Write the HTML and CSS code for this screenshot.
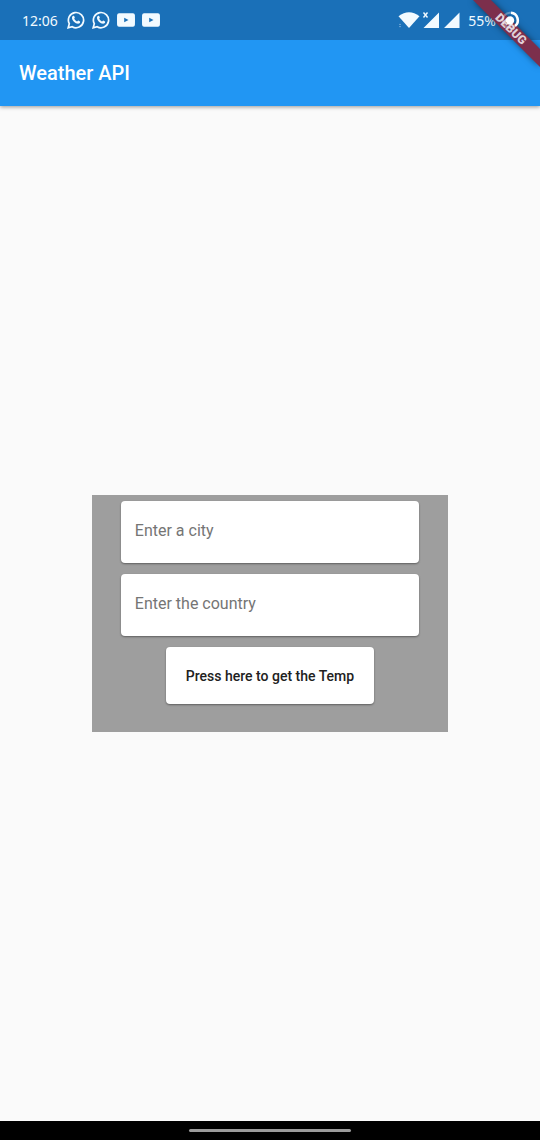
FILE: index.html
```html
<!DOCTYPE html>
<html lang="en">
<head>
<meta charset="utf-8">
<meta name="viewport" content="width=device-width, initial-scale=1">
<title>Weather API</title>
<link rel="stylesheet" href="styles.css">
</head>
<body>
<div class="status">
  <span class="time">12:06</span>
  <svg class="chat" viewBox="0 0 18 18" aria-hidden="true"><path d="M1.2 16.8l1.1-4.1A7.6 7.6 0 1 1 5.2 15.7z" fill="none" stroke="currentColor" stroke-width="1.7"/><path d="M6.2 4.8c.5-.2.9 0 1.1.5l.5 1.2c.1.4-.6 1-.6 1.3.6 1.2 1.6 2.1 2.8 2.6.4.1.9-1 1.3-.9l1.7.9c.3.2.1 1.4-.5 1.9-2.5 1.8-7.8-2.5-7.5-5.6.1-.8.6-1.6 1.2-1.9z" fill="currentColor"/></svg>
  <svg class="chat" viewBox="0 0 18 18" aria-hidden="true"><path d="M1.2 16.8l1.1-4.1A7.6 7.6 0 1 1 5.2 15.7z" fill="none" stroke="currentColor" stroke-width="1.7"/><path d="M6.2 4.8c.5-.2.9 0 1.1.5l.5 1.2c.1.4-.6 1-.6 1.3.6 1.2 1.6 2.1 2.8 2.6.4.1.9-1 1.3-.9l1.7.9c.3.2.1 1.4-.5 1.9-2.5 1.8-7.8-2.5-7.5-5.6.1-.8.6-1.6 1.2-1.9z" fill="currentColor"/></svg>
  <svg class="video" viewBox="0 0 18 14" aria-hidden="true"><path fill="currentColor" fill-rule="evenodd" d="M2 .3Q9 0 16 .3 17.7.5 17.9 2 18.1 7 17.9 12 17.7 13.5 16 13.7 9 14 2 13.7.3 13.5.1 12-.1 7 .1 2 .3.5 2 .3zM7.2 4.7v4.6L11.5 7z"/></svg>
  <svg class="video" viewBox="0 0 18 14" aria-hidden="true"><path fill="currentColor" fill-rule="evenodd" d="M2 .3Q9 0 16 .3 17.7.5 17.9 2 18.1 7 17.9 12 17.7 13.5 16 13.7 9 14 2 13.7.3 13.5.1 12-.1 7 .1 2 .3.5 2 .3zM7.2 4.7v4.6L11.5 7z"/></svg>
  <span class="system">
    <svg class="signals" viewBox="0 0 64 20" aria-hidden="true"><g fill="currentColor"><path d="M.5 6.2Q11 -1.5 21.5 6.2L11 18z"/><path d="M41 2.5V18H25.5zM61.5 2.5V18H46z"/><path d="M1 15l1-1.5 1 1.5zM1 16l1 1.5 1-1.5z" opacity=".5"/></g><path d="M25.5 2.5l4 5M29.5 2.5l-4 5" stroke="currentColor" stroke-width="1.4"/></svg>
    <span class="percent">55%</span>
  </span>
</div>
<header class="appbar"><h1>Weather API</h1></header>
<main class="content">
  <form class="panel">
    <input class="field" type="text" placeholder="Enter a city" aria-label="City">
    <input class="field" type="text" placeholder="Enter the country" aria-label="Country">
    <button class="submit" type="button">Press here to get the Temp</button>
  </form>
</main>
<footer class="navbar"><span class="handle"></span></footer>
<svg class="ribbon" viewBox="0 0 75 75" aria-hidden="true">
  <path class="band" d="M8 0H26L75 49V67z"/>
  <text class="debug" x="46" y="33" transform="rotate(45 46 29)" text-anchor="middle">DEBUG</text>
  <circle cx="45" cy="20.5" r="4.2" fill="#fff"/>
  <path d="M46 12.700a7.500 7.500 0 0 1 4 13.300" fill="none" stroke="#fff" stroke-width="2.600"/>
  <path d="M50 26A7.500 7.500 0 1 1 46 12.700" fill="none" stroke="#fff" stroke-width="2" opacity=".3"/>
</svg>
</body>
</html>
```
FILE: styles.css
```css
* {
  box-sizing: border-box;
}

body {
  margin: 0;
  min-height: 100vh;
  display: flex;
  flex-direction: column;
  position: relative;
  background: #fafafa;
  font-family: Roboto, sans-serif;
}

.status {
  display: flex;
  align-items: center;
  height: 40px;
  padding: 0 44px 0 22px;
  background: #1a70b8;
  color: #f2faff;
  font-family: "Noto Sans", sans-serif;
  font-size: 14px;
}

.time {
  width: 45px;
}

.chat {
  width: 18px;
  height: 18px;
  margin-right: 7px;
}

.video {
  width: 18px;
  height: 14px;
  margin-right: 7px;
}

.system {
  display: flex;
  align-items: center;
  gap: 6px;
  margin-left: auto;
}

.signals {
  width: 64px;
  height: 20px;
}

.appbar {
  display: flex;
  align-items: center;
  height: 66px;
  padding: 0 19px;
  background: #2196f3;
  color: #fff;
  box-shadow: 0 1px 4px rgba(0, 0, 0, 0.4);
  clip-path: inset(0 0 -8px 0);
}

.appbar h1 {
  margin: 0;
  font-size: 20px;
  font-weight: 500;
}

.content {
  flex: 1;
  display: flex;
  align-items: center;
  justify-content: center;
}

.panel {
  display: flex;
  flex-direction: column;
  align-items: center;
  gap: 11px;
  width: 66%;
  padding: 6px 29px 28px;
  background: #9e9e9e;
}

.field,
.submit {
  border: 0;
  border-radius: 4px;
  background: #fff;
  box-shadow: 0 1px 2px rgba(0, 0, 0, 0.4);
  font-family: inherit;
}

.field {
  width: 100%;
  height: 62px;
  padding: 0 14px 4px;
  font-size: 16px;
  color: #212121;
}

.field::placeholder {
  color: #757575;
  opacity: 1;
}

.submit {
  height: 57px;
  padding: 0 20px;
  font-size: 14px;
  font-weight: 500;
  color: #212121;
}

.navbar {
  display: flex;
  justify-content: center;
  align-items: center;
  height: 19px;
  background: #000;
}

.handle {
  width: 30%;
  height: 3px;
  border-radius: 2px;
  background: #9b9b9b;
}

.ribbon {
  position: absolute;
  top: 0;
  right: 0;
  width: 75px;
  height: 75px;
}

.band {
  fill: #7c2f4c;
  filter: drop-shadow(0 0 3px rgba(0, 0, 0, 0.5));
}

.debug {
  fill: #e0d0d8;
  font-size: 12px;
  font-weight: 900;
}
```
